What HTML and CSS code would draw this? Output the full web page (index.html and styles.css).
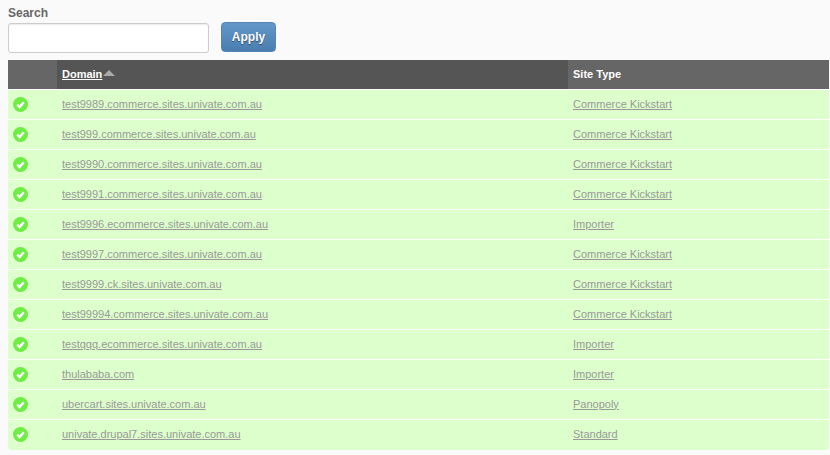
FILE: index.html
```html
<!DOCTYPE html>
<html lang="en">
<head>
<meta charset="utf-8">
<title>Sites</title>
<link rel="stylesheet" href="styles.css">
</head>
<body>
<form class="search">
  <div class="field">
    <label class="label" for="q">Search</label>
    <input class="input" id="q" type="text">
  </div>
  <button class="apply" type="button">Apply</button>
</form>
<table class="sites">
  <colgroup><col class="c1"><col class="c2"><col class="c3"></colgroup>
  <thead>
    <tr>
      <th></th>
      <th class="active"><a href="#">Domain</a><svg class="sort" width="12" height="6" viewBox="0 0 12 6"><path d="M6 0 12 6H0Z"/></svg></th>
      <th>Site Type</th>
    </tr>
  </thead>
  <tbody>
    <tr><td><svg class="ok" width="16" height="16" viewBox="0 0 16 16"><circle cx="7.5" cy="7.5" r="7.5"/><path d="M4.2 7.6 6.6 10 10.8 5.2"/></svg></td><td><a href="#">test9989.commerce.sites.univate.com.au</a></td><td><a href="#">Commerce Kickstart</a></td></tr>
    <tr><td><svg class="ok" width="16" height="16" viewBox="0 0 16 16"><circle cx="7.5" cy="7.5" r="7.5"/><path d="M4.2 7.6 6.6 10 10.8 5.2"/></svg></td><td><a href="#">test999.commerce.sites.univate.com.au</a></td><td><a href="#">Commerce Kickstart</a></td></tr>
    <tr><td><svg class="ok" width="16" height="16" viewBox="0 0 16 16"><circle cx="7.5" cy="7.5" r="7.5"/><path d="M4.2 7.6 6.6 10 10.8 5.2"/></svg></td><td><a href="#">test9990.commerce.sites.univate.com.au</a></td><td><a href="#">Commerce Kickstart</a></td></tr>
    <tr><td><svg class="ok" width="16" height="16" viewBox="0 0 16 16"><circle cx="7.5" cy="7.5" r="7.5"/><path d="M4.2 7.6 6.6 10 10.8 5.2"/></svg></td><td><a href="#">test9991.commerce.sites.univate.com.au</a></td><td><a href="#">Commerce Kickstart</a></td></tr>
    <tr><td><svg class="ok" width="16" height="16" viewBox="0 0 16 16"><circle cx="7.5" cy="7.5" r="7.5"/><path d="M4.2 7.6 6.6 10 10.8 5.2"/></svg></td><td><a href="#">test9996.ecommerce.sites.univate.com.au</a></td><td><a href="#">Importer</a></td></tr>
    <tr><td><svg class="ok" width="16" height="16" viewBox="0 0 16 16"><circle cx="7.5" cy="7.5" r="7.5"/><path d="M4.2 7.6 6.6 10 10.8 5.2"/></svg></td><td><a href="#">test9997.commerce.sites.univate.com.au</a></td><td><a href="#">Commerce Kickstart</a></td></tr>
    <tr><td><svg class="ok" width="16" height="16" viewBox="0 0 16 16"><circle cx="7.5" cy="7.5" r="7.5"/><path d="M4.2 7.6 6.6 10 10.8 5.2"/></svg></td><td><a href="#">test9999.ck.sites.univate.com.au</a></td><td><a href="#">Commerce Kickstart</a></td></tr>
    <tr><td><svg class="ok" width="16" height="16" viewBox="0 0 16 16"><circle cx="7.5" cy="7.5" r="7.5"/><path d="M4.2 7.6 6.6 10 10.8 5.2"/></svg></td><td><a href="#">test99994.commerce.sites.univate.com.au</a></td><td><a href="#">Commerce Kickstart</a></td></tr>
    <tr><td><svg class="ok" width="16" height="16" viewBox="0 0 16 16"><circle cx="7.5" cy="7.5" r="7.5"/><path d="M4.2 7.6 6.6 10 10.8 5.2"/></svg></td><td><a href="#">testqqq.ecommerce.sites.univate.com.au</a></td><td><a href="#">Importer</a></td></tr>
    <tr><td><svg class="ok" width="16" height="16" viewBox="0 0 16 16"><circle cx="7.5" cy="7.5" r="7.5"/><path d="M4.2 7.6 6.6 10 10.8 5.2"/></svg></td><td><a href="#">thulababa.com</a></td><td><a href="#">Importer</a></td></tr>
    <tr><td><svg class="ok" width="16" height="16" viewBox="0 0 16 16"><circle cx="7.5" cy="7.5" r="7.5"/><path d="M4.2 7.6 6.6 10 10.8 5.2"/></svg></td><td><a href="#">ubercart.sites.univate.com.au</a></td><td><a href="#">Panopoly</a></td></tr>
    <tr><td><svg class="ok" width="16" height="16" viewBox="0 0 16 16"><circle cx="7.5" cy="7.5" r="7.5"/><path d="M4.2 7.6 6.6 10 10.8 5.2"/></svg></td><td><a href="#">univate.drupal7.sites.univate.com.au</a></td><td><a href="#">Standard</a></td></tr>
  </tbody>
</table>
</body>
</html>
```
FILE: styles.css
```css
html, body { margin: 0; padding: 0; }
body {
  background: #fafafa;
  font-family: "Liberation Sans", Arial, sans-serif;
  font-size: 11px;
  color: #666;
  padding: 7px 1px 0 8px;
  overflow: hidden;
}
.search { display: flex; align-items: flex-start; gap: 12px; height: 53px; }
.field { display: flex; flex-direction: column; }
.label { font-weight: bold; font-size: 12px; line-height: 13px; color: #666; margin-bottom: 3px; }
.input {
  box-sizing: border-box;
  width: 201px;
  height: 30px;
  margin: 0;
  border: 1px solid #ccc;
  border-radius: 3px;
  background: #fff;
  box-shadow: inset 0 1px 1px rgba(0,0,0,.08);
}
.apply {
  box-sizing: border-box;
  width: 55px;
  height: 30px;
  margin: 15px 0 0;
  border: 1px solid #5585b5;
  border-radius: 4px;
  background: linear-gradient(#6497c9, #4a7db0);
  color: #fff;
  font: bold 12px "Liberation Sans", Arial, sans-serif;
  text-shadow: 0 1px 1px rgba(0,0,0,.45);
}
.sites {
  border-collapse: separate;
  border-spacing: 0;
  table-layout: fixed;
  width: 821px;
}
.c1 { width: 49px; }
.c2 { width: 511px; }
.c3 { width: 261px; }
th {
  height: 27px;
  padding: 0 5px 2px;
  background: #666;
  color: #fff;
  font-size: 11px;
  font-weight: bold;
  text-align: left;
  border-bottom: 1px solid #fff;
}
th.active { background: #555; }
th a { color: #fff; }
.sort { margin-left: 1px; vertical-align: 2px; fill: #aaa; }
td {
  height: 27px;
  padding: 0 5px 2px;
  background: #dfc;
  border-bottom: 1px solid #fff;
  line-height: 14px;
}
td:first-child { padding: 0 0 0 5px; }
tbody tr:last-child td { border-bottom: 0; height: 28px; }
tbody tr:last-child td:first-child { border-bottom-left-radius: 4px; }
tbody tr:last-child td:last-child { border-bottom-right-radius: 4px; }
td a { color: #999; }
.ok { display: block; }
.ok circle { fill: #6fec45; }
.ok path { fill: none; stroke: #fff; stroke-width: 2.4; }
```
